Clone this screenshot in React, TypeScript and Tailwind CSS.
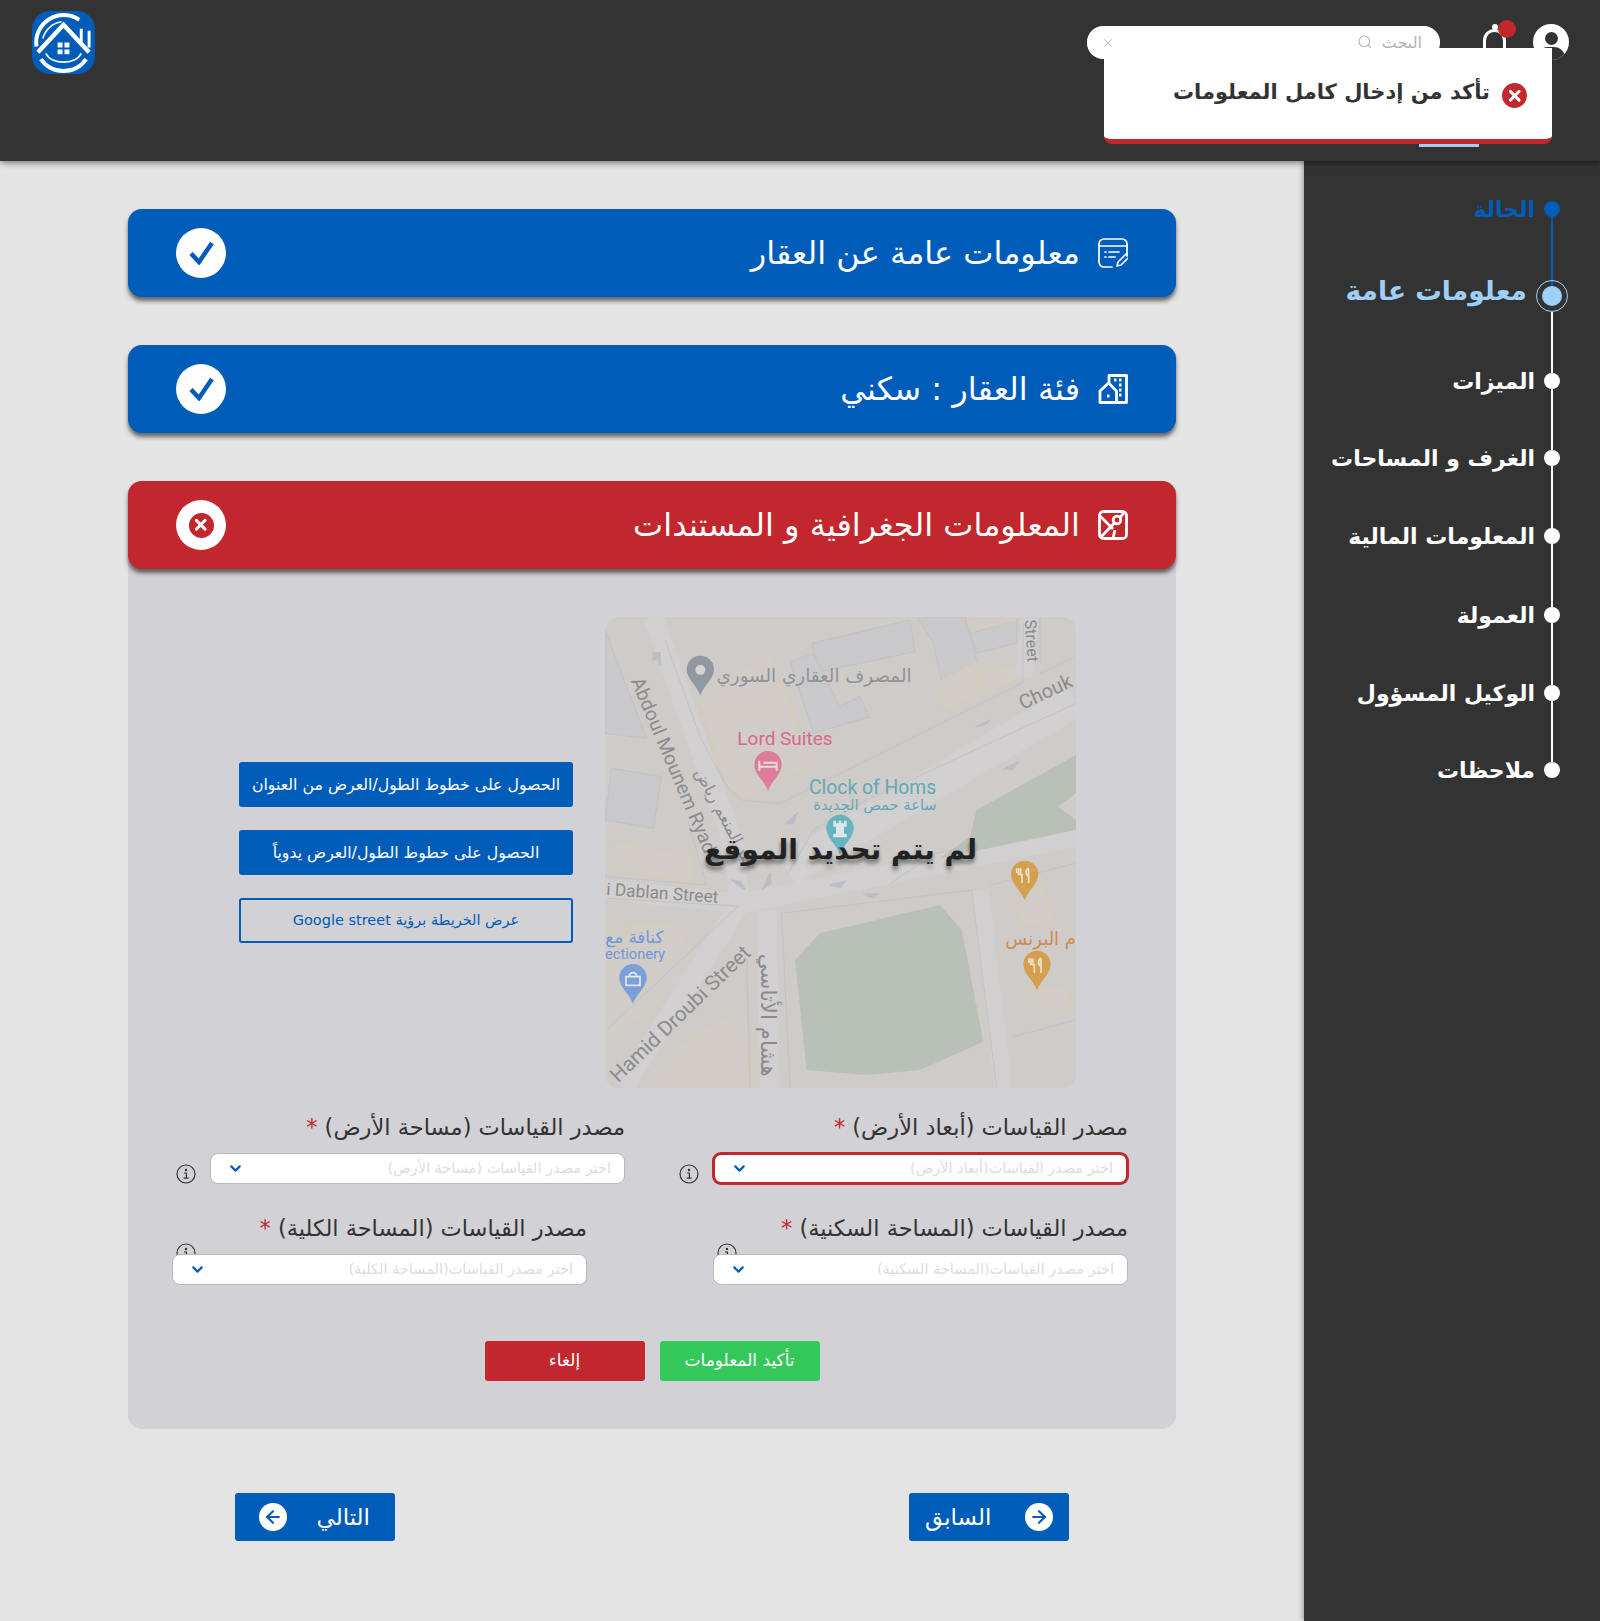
import { Search, X, ChevronDown, ArrowLeft, ArrowRight } from 'lucide-react';
import type { ReactNode } from 'react';

const steps = [
  { label: 'الحالة', height: 'h-[85px]', state: 'done' },
  { label: 'معلومات عامة', height: 'h-[87px]', state: 'active' },
  { label: 'الميزات', height: 'h-[77px]', state: 'idle' },
  { label: 'الغرف و المساحات', height: 'h-[78px]', state: 'idle' },
  { label: 'المعلومات المالية', height: 'h-[79px]', state: 'idle' },
  { label: 'العمولة', height: 'h-[78px]', state: 'idle' },
  { label: 'الوكيل المسؤول', height: 'h-[77px]', state: 'idle' },
  { label: 'ملاحظات', height: 'h-[16px]', state: 'last' },
];

const Logo = () => (
  <svg viewBox="0 0 64 64" className="w-[63px] h-[63px]">
    <rect width="64" height="64" rx="18" fill="#005cb9" />
    <path d="M4.5 36A28 28 0 0 1 48 9" fill="none" stroke="#fff" strokeWidth="4" />
    <path d="M11 28A23 23 0 0 1 30 11" fill="none" stroke="#fff" strokeWidth="1.6" />
    <path d="M9 49A28 28 0 0 0 55 49" fill="none" stroke="#fff" strokeWidth="4" />
    <path d="M14 43C20 55 44 55 50 43" fill="none" stroke="#fff" strokeWidth="1.8" />
    <path d="M6 42L32 14L58 42" fill="none" stroke="#fff" strokeWidth="4.5" />
    <path d="M50 18V32M58 20V37" fill="none" stroke="#fff" strokeWidth="3" />
    <path d="M26 32h5v5h-5zM33 32h5v5h-5zM26 39h5v5h-5zM33 39h5v5h-5z" fill="#fff" />
  </svg>
);

const FormIcon = () => (
  <svg viewBox="0 0 30 30" className="w-[30px] h-[30px]" fill="none" stroke="#fff" strokeWidth="1.7" strokeLinecap="round" strokeLinejoin="round">
    <path d="M14 29H6a5 5 0 0 1-5-5V6a5 5 0 0 1 5-5h18a5 5 0 0 1 5 5v12" />
    <path d="M1 8h28M7 14h1M11 14h10M7 19h1M11 19h6" />
    <path d="M19 28l1-4 7-7a2 2 0 0 1 3 3l-7 7z" />
  </svg>
);

const BuildingIcon = () => (
  <svg viewBox="0 0 30 30" className="w-[30px] h-[30px]" fill="none" stroke="#fff" strokeWidth="2.8" strokeLinejoin="round">
    <path d="M11 9V1.5h17.5v27H2V17L10.5 9l8 8v11.5" />
    <path d="M16 6h2.5M21 6h2.5M21 11h2.5M21 16h2.5M21 21h2.5M9 22h2.5" />
  </svg>
);

const MapIcon = () => (
  <svg viewBox="0 0 30 30" className="w-[30px] h-[30px]" fill="none" stroke="#fff" strokeWidth="2.8" strokeLinejoin="round">
    <rect x="1.5" y="1.5" width="27" height="27" rx="4" />
    <path d="M2 6l13 13M3 27L26 3M17 20l-2 8" />
    <circle cx="19" cy="10" r="3.8" fill="#c1272d" />
  </svg>
);

const TickIcon = () => (
  <svg viewBox="0 0 25 24" className="w-[25px] h-[24px]" fill="none" stroke="#005cb9" strokeWidth="4.5">
    <path d="M2 12.5L10 21L23 2" />
  </svg>
);

const InfoIcon = ({ className }: { className?: string }) => (
  <svg viewBox="0 0 20 20" className={`w-[20px] h-[20px] shrink-0 ${className ?? ''}`} fill="none" stroke="#333" strokeWidth="1.2">
    <circle cx="10" cy="10" r="9" />
    <path d="M8 9h2.4v5M7.6 14.2h5" />
    <circle cx="10" cy="6" r="0.6" fill="#333" />
  </svg>
);

const ErrorDot = ({ size }: { size: string }) => (
  <span className={`flex items-center justify-center rounded-full bg-[#c1272d] ${size}`}>
    <X className="w-[70%] h-[70%] text-white" strokeWidth={4} />
  </span>
);

const SectionCard = ({ title, icon, error }: { title: string; icon: ReactNode; error?: boolean }) => (
  <div className={`flex items-center h-[88px] rounded-[14px] px-[48px] shadow-[0_4px_4px_rgba(0,0,0,0.55)] ${error ? 'bg-[#c1272d]' : 'bg-[#005cb9]'}`}>
    {icon}
    <span className="mr-[18px] text-[32px] text-white">{title}</span>
    <span className="mr-auto flex items-center justify-center w-[50px] h-[50px] rounded-full bg-white">
      {error ? <ErrorDot size="w-[25px] h-[25px]" /> : <TickIcon />}
    </span>
  </div>
);

const Field = ({ label, placeholder, error, stacked }: { label: string; placeholder: string; error?: boolean; stacked?: boolean }) => {
  const select = (
    <div className={`relative z-10 flex items-center justify-between flex-1 h-[31px] bg-white rounded-[8px] pr-[13px] pl-[16px] ${error ? 'border-2 border-[#c1272d] ring-1 ring-[#c1272d]' : 'border border-[#b9b9bd]'}`}>
      <span className="text-[14.5px] text-[#dcdcdf] whitespace-nowrap">{placeholder}</span>
      <ChevronDown className="w-[17px] h-[17px] text-[#005cb9]" strokeWidth={3} />
    </div>
  );
  const title = (
    <span className="text-[22.5px] leading-[32px] text-[#333] whitespace-nowrap">
      {label} <span className="text-[#c1272d]">*</span>
    </span>
  );
  if (stacked) {
    return (
      <div className="w-[415px]">
        <div className="flex justify-between">
          {title}
          <InfoIcon className="self-end ml-[4px] -mb-[19px]" />
        </div>
        <div className="flex mt-[10px]">{select}</div>
      </div>
    );
  }
  return (
    <div className="w-[449px]">
      {title}
      <div className="flex items-start mt-[10px]">
        {select}
        <InfoIcon className="mr-[14px] mt-[11px]" />
      </div>
    </div>
  );
};

// map picture, coordinates follow a 3x crop of the reference
const MapDrawing = () => (
  <svg viewBox="15 21 1413 1413" className="w-full h-full [direction:ltr]" fontFamily="Roboto, sans-serif">
    <rect x="0" y="0" width="1440" height="1440" fill="#cecbc9" />
    <g fill="#c9c8ca" stroke="#c2c1c5" strokeWidth="3">
      <path d="M15 60L140 385L15 370Z" />
      <path d="M35 475L185 500L160 655L15 630Z" />
      <path d="M635 100L930 30L945 125L660 185Z" />
      <path d="M570 155L640 130L720 290L780 260L808 322L640 370Z" />
      <path d="M950 20H1095L1130 155L1025 215L1000 100Z" />
      <path d="M1110 70L1250 30L1250 100L1130 130Z" />
    </g>
    <g fill="#d1ccc8" stroke="#d9cda8" strokeWidth="3">
      <path d="M300 280L510 122L635 460L430 572L385 540Z" />
      <path d="M1025 210L1130 155L1150 245L1030 305Z" />
      <path d="M1140 190L1250 165L1255 205L1150 245Z" />
      <path d="M1100 20H1250L1250 30L1115 65Z" />
      <path d="M50 695L285 740L275 820L40 780Z" />
      <path d="M15 920L75 925L70 1020L15 1090Z" />
      <path d="M100 940L240 945L280 1040L250 1130L15 1300L15 1090Z" />
      <path d="M160 1434L230 1310L390 1215L445 1230L455 1434Z" />
      <path d="M1240 860L1330 830L1360 930L1265 955Z" />
      <path d="M1290 1140L1400 1125L1420 1180L1350 1225L1320 1180Z" />
    </g>
    <g fill="none" stroke="#d1cfcf">
      <path d="M160 21L400 700L420 880L70 1434" strokeWidth="60" />
      <path d="M15 840L420 880L1428 680" strokeWidth="60" />
      <path d="M560 780L1428 270" strokeWidth="100" />
      <path d="M1290 21L1270 200" strokeWidth="52" />
      <path d="M500 900L510 1434" strokeWidth="60" />
      <path d="M1140 840L1210 1434" strokeWidth="52" />
    </g>
    <g fill="none" stroke="#c3c2c5" strokeWidth="3">
      <path d="M195 90L300 380L380 530L430 572L540 580L1268 218L1270 40" />
      <path d="M15 800L320 825L265 640" />
      <path d="M20 865L415 888L20 1260" />
      <path d="M440 1045L450 1434" />
      <path d="M570 1434L545 910L1115 840L1190 1434" />
      <path d="M1170 825L1428 760" />
      <path d="M1240 1280L1428 1230" />
      <path d="M870 820L1010 730L1428 640" />
      <path d="M565 790L640 660L800 570L1428 280" />
      <path d="M1320 190L1428 140" />
      <path d="M1320 21V160" />
    </g>
    <path d="M1130 600L1428 435V660L1020 745L1110 680Z" fill="#b9c0b7" />
    <path d="M585 1050L660 970L1020 885L1085 960L1150 1295L960 1380L800 1395L620 1380Z" fill="#b9c0b7" />
    <path d="M1375 590L1428 550V630Z" fill="#cecbc9" />
    <g fill="#bdbcc8" stroke="#bdbcc8" strokeWidth="5">
      <path d="M160 130L180 128L180 165L172 145L160 150Z" />
      <path d="M1128 350L1170 330L1155 345Z" />
      <path d="M1214 476L1255 456L1238 478Z" />
      <path d="M558 640L590 612L580 640Z" />
      <path d="M395 810L435 838L420 815Z" />
      <path d="M510 790L490 835L512 820Z" />
      <path d="M690 825L735 815L720 832Z" />
      <path d="M790 852L838 852L815 862Z" />
    </g>
    <g fill="#8b8b8d">
      <text transform="translate(92,212) rotate(67)" fontSize="58">Abdoul Mounem Ryad</text>
      <text x="18" y="855" transform="rotate(4 18 855)" fontSize="52">i Dablan Street</text>
      <text transform="translate(55,1420) rotate(-44)" fontSize="62">Hamid Droubi Street</text>
      <text transform="translate(1268,300) rotate(-25)" fontSize="60">Chouk</text>
      <text transform="translate(1274,30) rotate(86)" fontSize="48">Street</text>
      <text transform="translate(440,780) rotate(62)" fontSize="48" direction="rtl" fontFamily="'DejaVu Sans', sans-serif">عبد المنعم رياض</text>
      <text transform="translate(482,1400) rotate(90)" fontSize="64" direction="rtl" fontFamily="'DejaVu Sans', sans-serif">هشام الأتاسي</text>
      <text x="935" y="215" fontSize="55" direction="rtl" fill="#8e9397" fontFamily="'DejaVu Sans', sans-serif">المصرف العقاري السوري</text>
    </g>
    <text x="412" y="405" fontSize="57" fill="#d8688f">Lord Suites</text>
    <text x="627" y="552" fontSize="58" fill="#63a8b4">Clock of Homs</text>
    <text x="1010" y="600" fontSize="44" fill="#63a8b4" direction="rtl" fontFamily="'DejaVu Sans', sans-serif">ساعة حمص الجديدة</text>
    <text x="190" y="1000" fontSize="50" fill="#6c98d8" direction="rtl" fontFamily="'DejaVu Sans', sans-serif">كنافة مع</text>
    <text x="15" y="1048" fontSize="44" fill="#6c98d8">ectionery</text>
    <text x="1428" y="1005" fontSize="54" fill="#d08a4c" direction="rtl" fontFamily="'DejaVu Sans', sans-serif">م البرنس</text>
    <path d="M301 137a41 41 0 0 1 41 41c0 28-30 48-41 78c-11-30-41-50-41-78a41 41 0 0 1 41-41z" fill="#8f999f" />
    <circle cx="301" cy="180" r="15" fill="#d6d4d5" />
    <path d="M504 423a41 41 0 0 1 41 41c0 28-30 48-41 78c-11-30-41-50-41-78a41 41 0 0 1 41-41z" fill="#dd7d9b" />
    <path d="M478 452v30M478 470h52v12M490 458h40v12" stroke="#e8dbe0" strokeWidth="6" fill="none" />
    <path d="M720 614a41 41 0 0 1 41 41c0 28-30 48-41 78c-11-30-41-50-41-78a41 41 0 0 1 41-41z" fill="#66b4c0" />
    <path d="M700 632h8v8h8v-8h8v8h8v-8h8v18h-8v22h8v10h-40v-10h8v-22h-8z" fill="#dce8ea" />
    <path d="M1274 752a41 41 0 0 1 41 41c0 28-30 48-41 78c-11-30-41-50-41-78a41 41 0 0 1 41-41z" fill="#d4a050" />
    <path d="M1256 775v18h10v26M1250 775v14M1262 775v14M1286 775v44M1286 775c-10 4-10 20 0 24" stroke="#eee3d0" strokeWidth="5" fill="none" />
    <path d="M1311 1022a41 41 0 0 1 41 41c0 28-30 48-41 78c-11-30-41-50-41-78a41 41 0 0 1 41-41z" fill="#d4a050" />
    <path d="M1293 1045v18h10v26M1287 1045v14M1299 1045v14M1323 1045v44M1323 1045c-10 4-10 20 0 24" stroke="#eee3d0" strokeWidth="5" fill="none" />
    <path d="M99 1062a41 41 0 0 1 41 41c0 28-30 48-41 78c-11-30-41-50-41-78a41 41 0 0 1 41-41z" fill="#7b9fd8" />
    <path d="M78 1100h42v26H78zM88 1100c0-16 22-16 22 0" stroke="#e3e8f2" strokeWidth="5" fill="none" />
  </svg>
);

export default function App() {
  return (
    <div dir="rtl" className="min-h-screen bg-[#e4e4e4] font-['DejaVu_Sans',sans-serif] flex flex-col">
      {/* Header */}
      <header className="relative z-20 h-[161px] bg-[#333333] shadow-[0_2px_6px_rgba(0,0,0,0.45)] flex items-start shrink-0">
        <div className="flex items-center mr-[31px] mt-[24px]">
          <span className="relative flex justify-center w-[36px] h-[36px] rounded-full bg-white overflow-hidden">
            <span className="absolute top-[8px] w-[13px] h-[13px] rounded-full bg-[#333]" />
            <span className="absolute top-[23px] w-[28px] h-[22px] rounded-full bg-[#333]" />
          </span>
          <span className="relative mr-[27px] w-[23px] h-[36px]">
            <span className="absolute inset-x-0 bottom-0 top-[5px] rounded-t-full border-[3px] border-white" />
            <span className="absolute top-0 right-[8px] w-[6px] h-[6px] rounded-full bg-white" />
            <span className="absolute -top-[4px] -right-[10px] w-[18px] h-[18px] rounded-full bg-[#c1272d]" />
          </span>
        </div>
        <div className="flex items-center justify-between mt-[26px] mr-[43px] w-[353px] h-[33px] bg-white rounded-[16px] pr-[18px] pl-[14px] text-[#b3b3b3]">
          <div className="flex items-center gap-[9px]">
            <span className="text-[16px]">البحث</span>
            <Search className="w-[16px] h-[16px] -mt-[2px]" strokeWidth={1.6} />
          </div>
          <X className="w-[14px] h-[14px]" strokeWidth={1.6} />
        </div>
        <div className="mr-auto ml-[32px] mt-[11px]">
          <Logo />
        </div>
        <div className="absolute right-[48px] top-[48px] w-[448px] h-[96px] bg-white rounded-b-[8px] border-b-[5px] border-[#c1272d] flex items-start pt-[32px] pr-[25px]">
          <ErrorDot size="w-[25px] h-[25px] mt-[3px]" />
          <span className="mr-[12px] text-[21px] font-bold leading-[24px] text-[#333]">تأكد من إدخال كامل المعلومات</span>
        </div>
        <span className="absolute right-[121px] top-[144px] w-[60px] h-[3px] bg-[#9fcff5]" />
      </header>

      <div className="flex flex-1">
        {/* Stepper */}
        <aside className="relative z-10 w-[296px] shrink-0 bg-[#333333] pt-[40px] pr-[40px] shadow-[-2px_0_4px_rgba(0,0,0,0.25)]">
          {steps.map((step) => (
            <div key={step.label} className={`flex ${step.height}`}>
              <div className="relative flex flex-col items-center w-[16px] shrink-0">
                {step.state === 'active' ? (
                  <>
                    <span className="w-[20px] h-[20px] shrink-0 rounded-full bg-[#9fcff5]" />
                    <span className="absolute -top-[6px] -right-[8px] w-[32px] h-[32px] rounded-full border border-[#9fcff5]" />
                    <span className="mt-[6px] w-[2px] flex-1 bg-white" />
                  </>
                ) : (
                  <>
                    <span className={`w-[16px] h-[16px] shrink-0 rounded-full ${step.state === 'done' ? 'bg-[#005cb9]' : 'bg-white'}`} />
                    {step.state !== 'last' && <span className={`w-[2px] flex-1 ${step.state === 'done' ? 'bg-[#005cb9]' : 'bg-white'}`} />}
                  </>
                )}
              </div>
              <span
                className={`whitespace-nowrap font-bold ${
                  step.state === 'active'
                    ? 'mr-[17px] -mt-[7px] text-[26.5px] leading-[24px] text-[#9fcff5]'
                    : step.state === 'done'
                      ? 'mr-[9px] text-[22px] leading-[18px] text-[#005cb9]'
                      : 'mr-[9px] text-[22px] leading-[18px] text-white'
                }`}
              >
                {step.label}
              </span>
            </div>
          ))}
        </aside>

        {/* Main column */}
        <main className="flex-1 px-[128px] pt-[48px]">
          <div className="flex flex-col gap-[48px]">
            <SectionCard title="معلومات عامة عن العقار" icon={<FormIcon />} />
            <SectionCard title="فئة العقار : سكني" icon={<BuildingIcon />} />
            <div className="bg-[#d2d1d6] rounded-[14px] h-[948px]">
              <SectionCard title="المعلومات الجغرافية و المستندات" icon={<MapIcon />} error />

              <div className="flex items-center pt-[48px] pr-[100px]">
                <div className="relative w-[471px] h-[471px] rounded-[14px] overflow-hidden">
                  <MapDrawing />
                  <span className="absolute inset-x-0 top-[212px] text-center text-[28px] font-bold text-[#222] [text-shadow:0_4px_4px_rgba(0,0,0,0.45)]">لم يتم تحديد الموقع</span>
                </div>
                <div className="mr-[32px] w-[334px] flex flex-col gap-[23px]">
                  <button className="h-[45px] rounded-[3px] bg-[#005cb9] text-white text-[15.75px]">الحصول على خطوط الطول/العرض من العنوان</button>
                  <button className="h-[45px] rounded-[3px] bg-[#005cb9] text-white text-[15.75px]">الحصول على خطوط الطول/العرض يدوياً</button>
                  <button className="h-[45px] rounded-[3px] border-2 border-[#005cb9] text-[#005cb9] text-[14.5px]">عرض الخريطة برؤية Google street</button>
                </div>
              </div>

              <div className="pr-[48px] pt-[23px]">
                <div className="flex gap-[54px]">
                  <Field label="مصدر القياسات (أبعاد الأرض)" placeholder="اختر مصدر القياسات(أبعاد الأرض)" error />
                  <Field label="مصدر القياسات (مساحة الأرض)" placeholder="اختر مصدر القياسات (مساحة الأرض)" />
                </div>
                <div className="flex gap-[126px] mt-[28px]">
                  <Field label="مصدر القياسات (المساحة السكنية)" placeholder="اختر مصدر القياسات(المساحة السكنية)" stacked />
                  <Field label="مصدر القياسات (المساحة الكلية)" placeholder="اختر مصدر القياسات(المساحة الكلية)" stacked />
                </div>
              </div>

              <div className="flex justify-center gap-[15px] mt-[56px] text-[17px] text-white">
                <button className="w-[160px] h-[40px] rounded-[3px] bg-[#34c85a]">تأكيد المعلومات</button>
                <button className="w-[160px] h-[40px] rounded-[3px] bg-[#c1272d]">إلغاء</button>
              </div>
            </div>
          </div>

          <div className="flex justify-between mt-[64px] px-[107px] text-white text-[23px]">
            <button className="flex items-center justify-between w-[160px] h-[48px] rounded-[3px] bg-[#005cb9] pr-[16px] pl-[16px]">
              <span className="flex items-center justify-center w-[28px] h-[28px] rounded-full bg-white">
                <ArrowRight className="w-[20px] h-[20px] text-[#005cb9]" strokeWidth={2.5} />
              </span>
              <span>السابق</span>
            </button>
            <button className="flex items-center justify-between w-[160px] h-[48px] rounded-[3px] bg-[#005cb9] pr-[25px] pl-[24px]">
              <span>التالي</span>
              <span className="flex items-center justify-center w-[28px] h-[28px] rounded-full bg-white">
                <ArrowLeft className="w-[20px] h-[20px] text-[#005cb9]" strokeWidth={2.5} />
              </span>
            </button>
          </div>
        </main>
      </div>
    </div>
  );
}
